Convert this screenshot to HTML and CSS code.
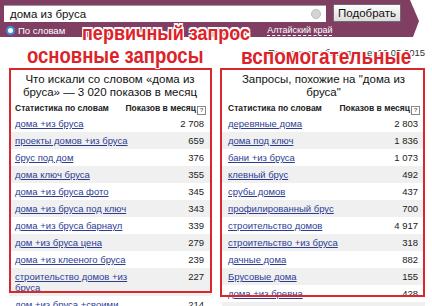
FILE: index.html
```html
<!DOCTYPE html>
<html lang="ru">
<head>
  <meta charset="UTF-8" />
  <meta name="viewport" content="width=device-width, initial-scale=1.0">
  <title>Подбор слов</title>
  <link rel="stylesheet" href="styles.css">
</head>
<body>
  <div class="topbar">
    <div class="search-row">
      <div class="search-input">
        <span>дома из бруса</span>
        <span class="clear"></span>
      </div>
      <button class="pick">Подобрать</button>
    </div>
    <div class="options-row">
      <span class="radio"></span>
      <span class="opt">По словам</span>
      <span class="region">Алтайский край</span>
    </div>
  </div>

  <div class="updated">Последнее обновление: 12.05.2015</div>

  <div class="columns">
    <div class="col col-left">
      <div class="col-title">Что искали со словом «дома из<br>бруса» — 3 020 показов в месяц</div>
      <div class="head"><span>Статистика по словам</span><span>Показов в месяц<i class="help">?</i></span></div>
      <div class="row"><a href="#">дома +из бруса</a><span>2 708</span></div>
      <div class="row"><a href="#">проекты домов +из бруса</a><span>659</span></div>
      <div class="row"><a href="#">брус под дом</a><span>376</span></div>
      <div class="row"><a href="#">дома ключ бруса</a><span>355</span></div>
      <div class="row"><a href="#">дома +из бруса фото</a><span>345</span></div>
      <div class="row"><a href="#">дома +из бруса под ключ</a><span>343</span></div>
      <div class="row"><a href="#">дома +из бруса барнаул</a><span>339</span></div>
      <div class="row"><a href="#">дом +из бруса цена</a><span>279</span></div>
      <div class="row"><a href="#">дома +из клееного бруса</a><span>239</span></div>
      <div class="row"><a href="#">строительство домов +из бруса</a><span>227</span></div>
      <div class="row"><a href="#">дом +из бруса +своими</a><span>214</span></div>
    </div>

    <div class="col col-right">
      <div class="col-title">Запросы, похожие на "дома из<br>бруса"</div>
      <div class="head"><span>Статистика по словам</span><span>Показов в месяц<i class="help">?</i></span></div>
      <div class="row"><a href="#">деревяные дома</a><span>2 803</span></div>
      <div class="row"><a href="#">дома под ключ</a><span>1 836</span></div>
      <div class="row"><a href="#">бани +из бруса</a><span>1 073</span></div>
      <div class="row"><a href="#">клевный брус</a><span>492</span></div>
      <div class="row"><a href="#">срубы домов</a><span>437</span></div>
      <div class="row"><a href="#">профилированный брус</a><span>700</span></div>
      <div class="row"><a href="#">строительство домов</a><span>4 917</span></div>
      <div class="row"><a href="#">строительство +из бруса</a><span>318</span></div>
      <div class="row"><a href="#">дачные дома</a><span>882</span></div>
      <div class="row"><a href="#">Брусовые дома</a><span>155</span></div>
      <div class="row"><a href="#">дома +из бревна</a><span>428</span></div>
      <div class="row"><a href="#">&nbsp;</a><span></span></div>
    </div>
  </div>

  <!-- пометки поверх скриншота -->
  <div class="frame frame-left"></div>
  <div class="frame frame-right"></div>
  <div class="note note-first">первичный запрос</div>
  <div class="note note-tall note-main">основные запросы</div>
  <div class="note note-tall note-extra">вспомогательные</div>
</body>
</html>
```

FILE: styles.css
```css
body {
  margin: 0;
  font-family: "Liberation Sans", Arial, sans-serif;
  background: #fff;
  color: #222;
  position: relative;
  width: 432px;
  height: 306px;
  overflow: hidden;
}
.topbar {
  height: 37px;
  background: #803f62;
  clip-path: polygon(0 0, 410px 0, 419px 21px, 413px 37px, 0 37px);
  padding: 4px 0 0 4px;
  box-sizing: border-box;
}
.search-row {
  display: flex;
  align-items: center;
}
.search-input {
  width: 322px;
  height: 17px;
  background: #fff;
  border-top: 1px solid #999;
  display: flex;
  align-items: center;
  justify-content: space-between;
  padding: 0 5px 0 6px;
  box-sizing: border-box;
  font-size: 11.5px;
  color: #111;
}
.clear {
  width: 8px;
  height: 8px;
  border-radius: 50%;
  background: #d4d4d4;
  border: 1px solid #bbb;
}
.pick {
  margin-left: 7px;
  width: 68px;
  height: 18px;
  padding: 0;
  font-family: "Liberation Sans", Arial, sans-serif;
  font-size: 11.5px;
  color: #111;
  background: linear-gradient(to bottom, #fdfdfd, #dcdcdc);
  border: 1px solid #6e6e6e;
  border-radius: 1px;
}
.options-row {
  display: flex;
  align-items: center;
  height: 13px;
  margin-top: 2px;
  padding-left: 2px;
  color: #fff;
  font-size: 9.5px;
}
.radio {
  width: 5px;
  height: 5px;
  border-radius: 50%;
  background: #fff;
  border: 2px solid #3d8ee0;
  margin-right: 3px;
}
.region {
  margin-left: 202px;
  border-bottom: 1px dashed #fff;
  line-height: 10px;
  font-size: 9px;
}
.updated {
  height: 31px;
  box-sizing: border-box;
  padding: 10px 7px 0 0;
  line-height: 11px;
  font-size: 9.5px;
  color: #333;
  text-align: right;
}
.columns {
  display: flex;
  gap: 11px;
  padding-left: 9px;
}
.col-left {
  width: 202px;
}
.col-right {
  width: 203px;
}
.col-title {
  padding-top: 5px;
  margin-bottom: 4px;
  font-size: 11.5px;
  line-height: 13px;
  text-align: center;
  color: #111;
}
.head {
  display: flex;
  justify-content: space-between;
  padding: 0 5px 0 6px;
  line-height: 10px;
  font-size: 8.5px;
  font-weight: bold;
  color: #222;
}
.help {
  display: inline-block;
  width: 7px;
  height: 7px;
  margin-left: 1px;
  border: 1px solid #888;
  font-size: 6px;
  line-height: 7px;
  text-align: center;
  font-style: normal;
  color: #666;
  vertical-align: -1px;
}
.row {
  display: flex;
  justify-content: space-between;
  padding: 3px 7px 3px 6px;
  line-height: 11px;
  font-size: 9.5px;
}
.row:nth-child(even) {
  background: #f0f0f0;
}
.row a {
  max-width: 120px;
  color: #2c3d93;
}
.row span {
  color: #222;
}
.frame {
  position: absolute;
  border: 2px solid #d8272d;
  box-sizing: border-box;
}
.frame-left {
  left: 9px;
  top: 68px;
  width: 203px;
  height: 225px;
}
.frame-right {
  left: 220px;
  top: 68px;
  width: 205px;
  height: 229px;
}
.note {
  position: absolute;
  font-weight: bold;
  color: #dc2329;
  font-size: 18px;
  line-height: 18px;
  text-shadow: 1px 0 #fff, -1px 0 #fff, 0 1px #fff, 0 -1px #fff,
    1px 1px #fff, -1px -1px #fff, 1px -1px #fff, -1px 1px #fff;
  white-space: nowrap;
}
.note-first {
  left: 82px;
  top: 23px;
  transform: scaleY(1.1);
  transform-origin: top left;
}
.note-tall {
  font-size: 19px;
  transform: scaleY(1.2);
  transform-origin: top left;
}
.note-main {
  left: 27px;
  top: 45px;
  font-size: 18.5px;
}
.note-extra {
  left: 241px;
  top: 46px;
}
```
